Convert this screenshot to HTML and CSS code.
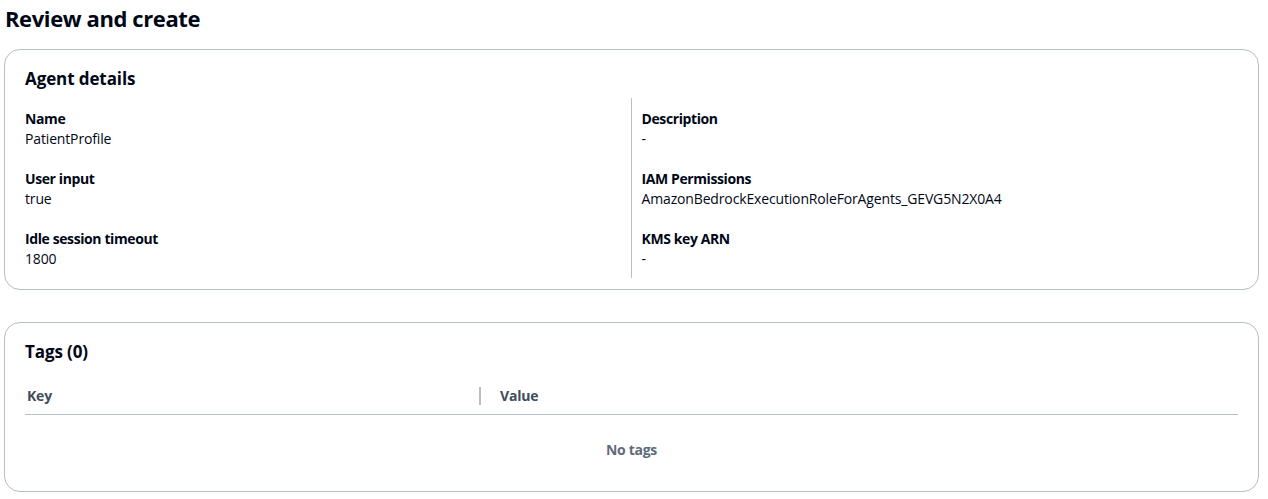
FILE: index.html
```html
<!DOCTYPE html>
<html lang="en">
<head>
<meta charset="utf-8">
<title>Review and create</title>
<link rel="stylesheet" href="styles.css">
</head>
<body>
<main class="page">
  <h1 class="page-title">Review and create</h1>

  <section class="card">
    <h2 class="card-title">Agent details</h2>
    <div class="columns">
      <div class="col">
        <div class="kv"><div class="kv-label">Name</div><div class="kv-value">PatientProfile</div></div>
        <div class="kv"><div class="kv-label">User input</div><div class="kv-value">true</div></div>
        <div class="kv"><div class="kv-label">Idle session timeout</div><div class="kv-value">1800</div></div>
      </div>
      <div class="col col-right">
        <div class="kv"><div class="kv-label">Description</div><div class="kv-value">-</div></div>
        <div class="kv"><div class="kv-label">IAM Permissions</div><div class="kv-value">AmazonBedrockExecutionRoleForAgents_GEVG5N2X0A4</div></div>
        <div class="kv"><div class="kv-label">KMS key ARN</div><div class="kv-value">-</div></div>
      </div>
    </div>
  </section>

  <section class="card card-tags">
    <h2 class="card-title">Tags (0)</h2>
    <div class="table">
      <div class="thead">
        <div class="th th-key">Key</div>
        <div class="th th-value"><span class="th-sep"></span>Value</div>
      </div>
      <div class="empty">No tags</div>
    </div>
  </section>
</main>
</body>
</html>
```

FILE: styles.css
```css
html, body {
  margin: 0;
  padding: 0;
  background: #ffffff;
}
body {
  font-family: "Open Sans", "Noto Sans", Arial, sans-serif;
  font-size: 14px;
  line-height: 20px;
  color: #000716;
}
.page {
  padding: 0 9px 0 4px;
}
.page-title {
  margin: 0;
  padding-top: 3px;
  font-size: 22px;
  line-height: 30px;
  font-weight: 700;
  letter-spacing: -0.4px;
  padding-left: 1px;
}
.card {
  margin-top: 16px;
  border: 1px solid #b6bec9;
  border-radius: 16px;
  padding: 18px 20px 11px 20px;
}
.card-tags {
  margin-top: 32px;
  padding: 18px 20px 7px 20px;
}
.card-title {
  margin: 0;
  font-size: 17px;
  line-height: 22px;
  font-weight: 700;
  letter-spacing: -0.1px;
}
.columns {
  display: grid;
  grid-template-columns: calc(50% - 1px) 1fr;
  margin-top: 8px;
}
.col {
  display: flex;
  flex-direction: column;
  gap: 20px;
  padding: 11px 0 9px 0;
}
.col-right {
  border-left: 1px solid #b6bec9;
  padding-left: 10px;
}
.kv-label {
  font-weight: 700;
  letter-spacing: -0.4px;
}
.kv-value {
  letter-spacing: -0.15px;
}
.table {
  margin-top: 15px;
}
.thead {
  display: flex;
  align-items: center;
  height: 36px;
  border-bottom: 1px solid #b6bec9;
}
.th {
  font-weight: 700;
  color: #414d5c;
  letter-spacing: -0.2px;
}
.th-key {
  width: 452px;
  padding-left: 2px;
}
.th-value {
  display: flex;
  align-items: center;
}
.th-sep {
  display: inline-block;
  width: 2px;
  height: 18px;
  background: #b6bec9;
  margin-right: 19px;
}
.empty {
  text-align: center;
  font-weight: 700;
  color: #5f6b7a;
  letter-spacing: -0.3px;
  padding: 25px 0 24px 0;
}
```
